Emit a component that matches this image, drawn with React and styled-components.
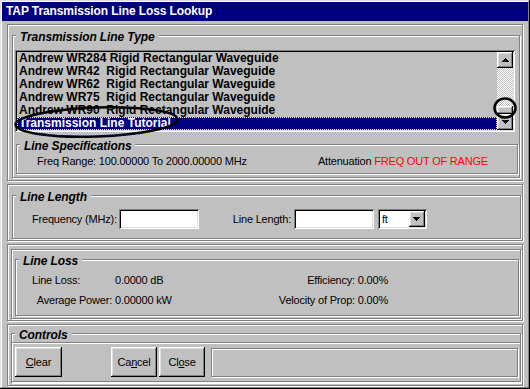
import React from "react";
import styled, { createGlobalStyle } from "styled-components";

const GlobalStyle = createGlobalStyle`
  html, body { margin: 0; padding: 0; background: #c0c0c0; }
  body { font-family: "Liberation Sans", Arial, sans-serif; font-size: 11px; color: #000; }
  *, *::before, *::after { box-sizing: border-box; }
`;

const raised = `box-shadow: inset -1px -1px #000, inset 1px 1px #fff, inset -2px -2px #808080, inset 2px 2px #dfdfdf;`;
const sunken = `box-shadow: inset 1px 1px #808080, inset -1px -1px #fff, inset 2px 2px #000, inset -2px -2px #dfdfdf;`;
const etched = `border: 1px solid #808080; box-shadow: inset 1px 1px #fff, 1px 1px #fff;`;

const Window = styled.div`
  position: relative;
  width: 530px;
  height: 389px;
  background: #c0c0c0;
  padding: 2px;
  display: flex;
  flex-direction: column;
  box-shadow: inset -1px -1px #000, inset 1px 1px #dfdfdf, inset -2px -2px #808080, inset 2px 2px #fff;
`;

const TitleBar = styled.div`
  height: 19px;
  flex: none;
  background: #000080;
  color: #fff;
  font: bold 12px/19px "Liberation Sans", Arial, sans-serif;
  letter-spacing: -0.1px;
  padding-left: 4px;
  white-space: nowrap;
`;

const Body = styled.div`
  flex: 1;
  display: flex;
  flex-direction: column;
  gap: 3px;
  padding: 3px 5px 0 5px;
  letter-spacing: -0.2px;
`;

const Panel = styled.section`
  ${etched}
  height: ${(p) => p.$h}px;
  flex: none;
  display: flex;
  flex-direction: column;
  padding: ${(p) => p.$pad};
`;

const Frame = styled.div`
  ${etched}
  flex: 1;
  display: flex;
  flex-direction: column;
  padding: ${(p) => p.$pad};
`;

const Group = styled.div`
  ${etched}
  position: relative;
  flex: ${(p) => (p.$h ? "none" : "1")};
  height: ${(p) => (p.$h ? `${p.$h}px` : "auto")};
  margin: ${(p) => p.$m || "0"};
  padding: ${(p) => p.$pad || "0"};
  display: flex;
  flex-direction: column;
`;

const GroupTitle = styled.span`
  position: absolute;
  top: ${(p) => p.$top ?? -6}px;
  left: ${(p) => p.$left ?? 3}px;
  padding: 0 4px;
  background: #c0c0c0;
  font: italic bold 12px/14px "Liberation Sans", Arial, sans-serif;
  letter-spacing: -0.1px;
  white-space: nowrap;
`;

const ListBox = styled.div`
  ${sunken}
  height: 82px;
  flex: none;
  padding: 2px;
  display: flex;
  background: #c0c0c0;
`;

const ListItems = styled.div`
  flex: 1;
  min-width: 0;
  overflow: hidden;
`;

const ListItem = styled.div`
  height: 13px;
  font: bold 12px/13px "Liberation Sans", Arial, sans-serif;
  letter-spacing: 0;
  white-space: pre;
  padding-left: 2px;
  ${(p) =>
    p.$selected &&
    `background: #000080; color: #fff; outline: 1px dotted #ffff80; outline-offset: -1px;`}
`;

const ScrollBar = styled.div`
  width: 16px;
  flex: none;
  display: flex;
  flex-direction: column;
`;

const ArrowButton = styled.div`
  width: 16px;
  height: 16px;
  flex: none;
  background: #c0c0c0;
  ${raised}
  display: flex;
  align-items: center;
  justify-content: center;
`;

const ScrollTrack = styled.div`
  flex: 1;
  display: flex;
  flex-direction: column;
  justify-content: flex-end;
  background: repeating-conic-gradient(#c0c0c0 0 25%, #fff 0 50%) 0 0 / 2px 2px;
`;

const Thumb = styled.div`
  height: 8px;
  background: #c0c0c0;
  ${raised}
`;

const SpecRow = styled.div`
  display: flex;
  justify-content: space-between;
  padding: 10px 29px 0 20px;
  line-height: 13px;
  white-space: nowrap;
`;

const Red = styled.span`
  color: #ff0000;
`;

const FieldRow = styled.div`
  display: flex;
  align-items: center;
  padding: 13px 0 0 19px;
  white-space: nowrap;
`;

const FieldLabel = styled.label`
  margin-left: ${(p) => p.$ml || 0}px;
  margin-right: ${(p) => p.$mr || 0}px;
`;

const TextInput = styled.input`
  width: 80px;
  height: 20px;
  border: 0;
  ${sunken}
  background: #fff;
  padding: 2px 4px;
  font: 11px "Liberation Sans", Arial, sans-serif;
  outline: none;
`;

const Combo = styled.div`
  width: 49px;
  height: 20px;
  margin-left: 4px;
  ${sunken}
  background: #fff;
  display: flex;
  align-items: center;
  padding: 2px;
`;

const ComboText = styled.span`
  flex: 1;
  padding-left: 2px;
`;

const LossGrid = styled.div`
  display: grid;
  grid-template-columns: 83px 1fr auto;
  row-gap: 7px;
  padding: 14px 130px 0 16px;
  line-height: 13px;
  white-space: nowrap;
`;

const Cell = styled.span`
  justify-self: ${(p) => p.$align || "start"};
  padding-right: ${(p) => p.$pr || 0}px;
`;

const ButtonBar = styled.div`
  ${etched}
  flex: 1;
  margin: 0 -1px;
  display: flex;
  align-items: center;
  padding: 3px 2px 3px 3px;
`;

const Button = styled.button`
  width: ${(p) => p.$w}px;
  height: 30px;
  margin-left: ${(p) => p.$ml || 0}px;
  border: 0;
  padding: 0;
  background: #c0c0c0;
  color: #000;
  ${raised}
  font: 11px "Liberation Sans", Arial, sans-serif;
  letter-spacing: -0.2px;
`;

const StatusBox = styled.div`
  flex: 1;
  height: 29px;
  margin-left: 6px;
  ${etched}
`;

const Annotation = styled.svg`
  position: absolute;
  left: 0;
  top: 0;
  pointer-events: none;
`;

const UpArrow = () => (
  <svg width="7" height="4" viewBox="0 0 7 4" shapeRendering="crispEdges">
    <path d="M3 0h1v1h1v1h1v1h1v1H0V3h1V2h1V1h1z" fill="#000" />
  </svg>
);

const DownArrow = () => (
  <svg width="7" height="4" viewBox="0 0 7 4" shapeRendering="crispEdges">
    <path d="M0 0h7v1H6v1H5v1H4v1H3V3H2V2H1V1H0z" fill="#000" />
  </svg>
);

const items = [
  "Andrew WR284 Rigid Rectangular Waveguide",
  "Andrew WR42  Rigid Rectangular Waveguide",
  "Andrew WR62  Rigid Rectangular Waveguide",
  "Andrew WR75  Rigid Rectangular Waveguide",
  "Andrew WR90  Rigid Rectangular Waveguide",
  "Transmission Line Tutorial",
];

export default function App() {
  return (
    <>
      <GlobalStyle />
      <Window>
        <TitleBar>TAP Transmission Line Loss Lookup</TitleBar>
        <Body>
          <Panel $h={157} $pad="10px 2px 2px 4px">
            <Group $pad="14px 4px 0 2px">
              <GroupTitle>Transmission Line Type</GroupTitle>
              <ListBox>
                <ListItems>
                  {items.map((t, i) => (
                    <ListItem key={t} $selected={i === items.length - 1}>
                      {t}
                    </ListItem>
                  ))}
                </ListItems>
                <ScrollBar>
                  <ArrowButton>
                    <UpArrow />
                  </ArrowButton>
                  <ScrollTrack>
                    <Thumb />
                  </ScrollTrack>
                  <ArrowButton>
                    <DownArrow />
                  </ArrowButton>
                </ScrollBar>
              </ListBox>
              <Group $h={30} $m="12px -3px 0 1px">
                <GroupTitle>Line Specifications</GroupTitle>
                <SpecRow>
                  <span>Freq Range: 100.00000 To 2000.00000 MHz</span>
                  <span>
                    Attenuation <Red>FREQ OUT OF RANGE</Red>
                  </span>
                </SpecRow>
              </Group>
            </Group>
          </Panel>

          <Panel $h={57} $pad="10px 1px 1px 4px">
            <Group>
              <GroupTitle>Line Length</GroupTitle>
              <FieldRow>
                <FieldLabel $mr={2}>Frequency (MHz):</FieldLabel>
                <TextInput defaultValue="" />
                <FieldLabel $ml={34} $mr={3}>
                  Line Length:
                </FieldLabel>
                <TextInput defaultValue="" />
                <Combo>
                  <ComboText>ft</ComboText>
                  <ArrowButton>
                    <DownArrow />
                  </ArrowButton>
                </Combo>
              </FieldRow>
            </Group>
          </Panel>

          <Panel $h={77} $pad="4px 1px 1px 3px">
            <Frame $pad="9px 1px 2px 3px">
              <Group>
                <GroupTitle>Line Loss</GroupTitle>
                <LossGrid>
                  <Cell>Line Loss:</Cell>
                  <Cell>0.0000 dB</Cell>
                  <Cell $align="end">Efficiency: 0.00%</Cell>
                  <Cell $align="end" $pr={3}>
                    Average Power:
                  </Cell>
                  <Cell>0.00000 kW</Cell>
                  <Cell $align="end">Velocity of Prop: 0.00%</Cell>
                </LossGrid>
              </Group>
            </Frame>
          </Panel>

          <Panel $h={62} $pad="8px 1px 2px 3px">
            <Group $pad="8px 0 0 0">
              <GroupTitle>Controls</GroupTitle>
              <ButtonBar>
                <Button $w={47}>
                  <u>C</u>lear
                </Button>
                <Button $w={46} $ml={49}>
                  Ca<u>n</u>cel
                </Button>
                <Button $w={46} $ml={2}>
                  Cl<u>o</u>se
                </Button>
                <StatusBox />
              </ButtonBar>
            </Group>
          </Panel>
        </Body>

        <Annotation width="530" height="389" viewBox="0 0 530 389">
          <ellipse
            cx="96.5"
            cy="122"
            rx="81"
            ry="14.5"
            transform="rotate(-2 96.5 122)"
            fill="none"
            stroke="#000"
            strokeWidth="2.5"
          />
          <ellipse cx="505" cy="108" rx="10.5" ry="9.5" fill="none" stroke="#000" strokeWidth="2.5" />
        </Annotation>
      </Window>
    </>
  );
}
